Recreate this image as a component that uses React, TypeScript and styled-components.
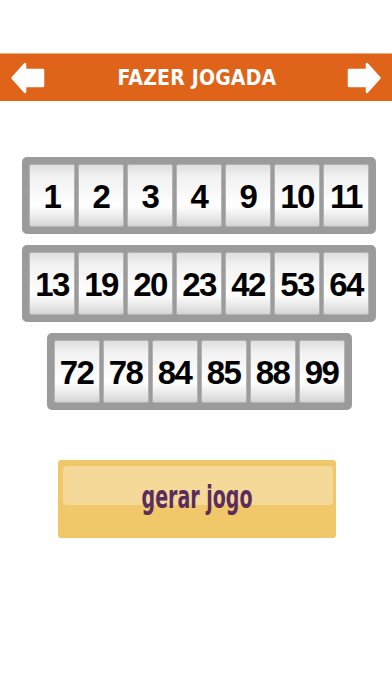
import React from "react";
import styled, { createGlobalStyle } from "styled-components";

const GlobalStyle = createGlobalStyle`
	html, body {
		margin: 0;
		padding: 0;
		background: #ffffff;
	}
	body {
		font-family: "Liberation Sans", Arial, sans-serif;
	}
`;

const Page = styled.div`
	width: 392px;
	min-height: 696px;
	padding-top: 53px;
	box-sizing: border-box;
	display: flex;
	flex-direction: column;
`;

const Header = styled.header`
	height: 48px;
	box-sizing: border-box;
	background: #e0631a;
	border-top: 1px solid #f0ad80;
	display: flex;
	align-items: center;
	justify-content: space-between;
	padding: 0 11px;
`;

const Title = styled.h1`
	margin: 0;
	color: #ffffff;
	font-family: "DejaVu Sans Condensed", "DejaVu Sans", sans-serif;
	font-weight: bold;
	font-size: 21px;
	letter-spacing: 0.2px;
	padding-left: 2px;
`;

const ArrowButton = styled.button`
	width: 34px;
	height: 32px;
	padding: 0;
	border: 0;
	background: transparent;
	display: flex;
	align-items: center;
	justify-content: center;
	cursor: pointer;
`;

const Board = styled.main`
	display: flex;
	flex-direction: column;
	align-items: center;
	padding: 56px 0 0 6px;
	gap: 11px;
`;

const Frame = styled.div`
	display: flex;
	gap: 3px;
	padding: 7px;
	background: #9b9b9b;
	border-radius: 5px;
`;

const Tile = styled.div`
	width: 46px;
	height: 63px;
	box-sizing: border-box;
	border: 1px solid #b4b4b4;
	border-radius: 2px;
	background: linear-gradient(
		to bottom,
		#dedede 0%,
		#f1f1f1 18%,
		#fafafa 50%,
		#ffffff 68%,
		#e6e6e6 88%,
		#d4d4d4 100%
	);
	display: flex;
	align-items: center;
	justify-content: center;
	font-family: "Liberation Sans", Arial, sans-serif;
	font-weight: bold;
	font-size: 33px;
	letter-spacing: -1.5px;
	color: #000000;
	padding-top: 3px;
`;

const ButtonWrap = styled.div`
	display: flex;
	justify-content: center;
	padding: 50px 0 0 2px;
`;

const GenerateButton = styled.button`
	position: relative;
	width: 278px;
	height: 78px;
	border: 0;
	border-radius: 3px;
	background: #f0c869;
	padding: 6px 3px 0 5px;
	box-sizing: border-box;
	cursor: pointer;
	display: flex;
	flex-direction: column;
`;

const Highlight = styled.div`
	height: 39px;
	border-radius: 4px;
	background: #f5d999;
`;

const ButtonLabel = styled.span`
	position: absolute;
	left: 0;
	right: 0;
	top: 19px;
	text-align: center;
	color: #5b2d5d;
	font-family: "DejaVu Sans Condensed", sans-serif;
	font-weight: bold;
	font-size: 32px;
	line-height: 36px;
	transform: scaleX(0.66);
`;

const rows: number[][] = [
	[1, 2, 3, 4, 9, 10, 11],
	[13, 19, 20, 23, 42, 53, 64],
	[72, 78, 84, 85, 88, 99],
];

const LeftArrow = () => (
	<svg width="34" height="32" viewBox="0 0 34 32">
		<path
			d="M1.5 16 L14 2 L14 8 L32 8 L32 24 L14 24 L14 30 Z"
			fill="#ffffff"
			stroke="#ffffff"
			strokeWidth="2.5"
			strokeLinejoin="round"
		/>
	</svg>
);

const RightArrow = () => (
	<svg width="34" height="32" viewBox="0 0 34 32">
		<path
			d="M32.5 16 L20 2 L20 8 L2 8 L2 24 L20 24 L20 30 Z"
			fill="#ffffff"
			stroke="#ffffff"
			strokeWidth="2.5"
			strokeLinejoin="round"
		/>
	</svg>
);

const App: React.FC = () => {
	return (
		<>
			<GlobalStyle />
			<Page>
				<Header>
					<ArrowButton aria-label="voltar">
						<LeftArrow />
					</ArrowButton>
					<Title>FAZER JOGADA</Title>
					<ArrowButton aria-label="avançar">
						<RightArrow />
					</ArrowButton>
				</Header>
				<Board>
					{rows.map((row, i) => (
						<Frame key={i}>
							{row.map((n) => (
								<Tile key={n}>{n}</Tile>
							))}
						</Frame>
					))}
				</Board>
				<ButtonWrap>
					<GenerateButton>
						<Highlight />
						<ButtonLabel>gerar jogo</ButtonLabel>
					</GenerateButton>
				</ButtonWrap>
			</Page>
		</>
	);
};

export default App;
